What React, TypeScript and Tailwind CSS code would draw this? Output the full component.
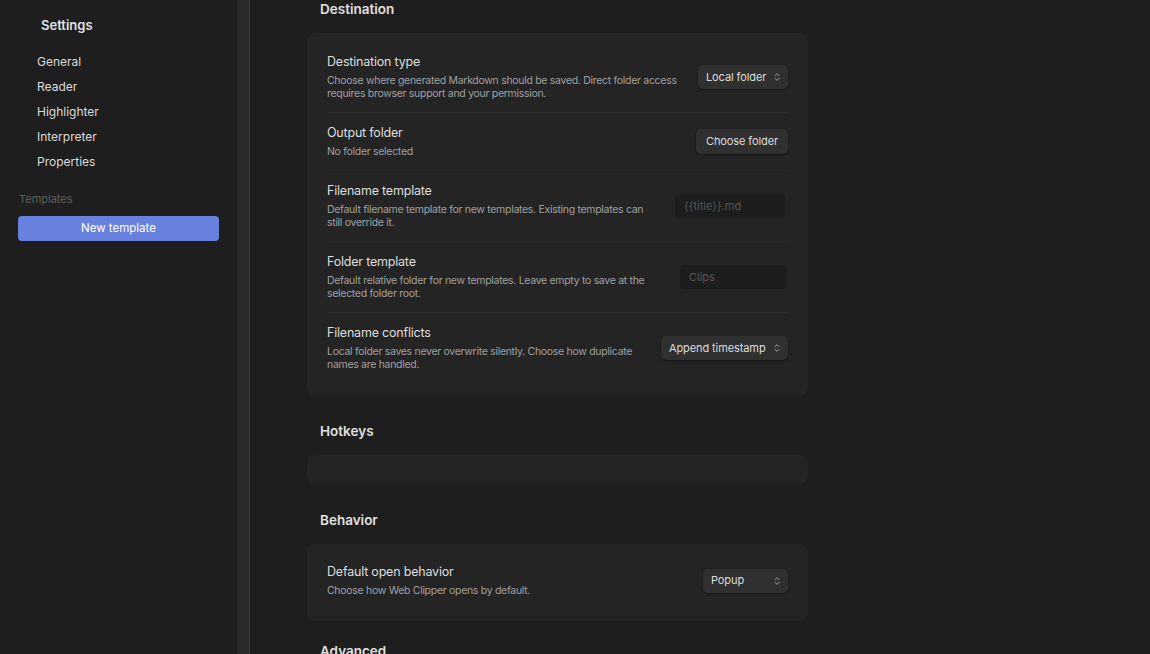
import { ChevronsUpDown } from 'lucide-react';

const navItems = ['General', 'Reader', 'Highlighter', 'Interpreter', 'Properties'];

const Select = ({ value, width }: { value: string; width: string }) => (
  <div className={`${width} h-[24px] flex items-center justify-between pl-[8px] pr-[6px] rounded-[5px] bg-[#303030] shadow-[0_1px_2px_rgba(0,0,0,0.45)] text-[11px] tracking-[-0.1px] text-[#dcdcdc] whitespace-nowrap flex-shrink-0`}>
    <span>{value}</span>
    <ChevronsUpDown size={10} strokeWidth={2} className="text-[#b5b5b5]" />
  </div>
);

const TextInput = ({ placeholder, width }: { placeholder: string; width: string }) => (
  <div className={`${width} h-[24px] flex items-center px-[9px] rounded-[4px] bg-[#1d1d1d] text-[11px] text-[#555555] flex-shrink-0`}>
    {placeholder}
  </div>
);

const Row = ({ title, desc, children, first }: { title: string; desc: string; children: React.ReactNode; first?: boolean }) => (
  <div className={`flex items-center justify-between gap-4 py-[12px] ${first ? '' : 'border-t border-[#2a2a2a]'}`}>
    <div className="flex-1 min-w-0">
      <p className="text-[12.5px] leading-[16px] tracking-[-0.2px] text-[#dedede]">{title}</p>
      <p className="mt-[4px] text-[10.5px] leading-[13px] tracking-[-0.3px] text-[#a0a0a0]">{desc}</p>
    </div>
    {children}
  </div>
);

const Section = ({ title, children, className }: { title: string; children?: React.ReactNode; className?: string }) => (
  <section className={className}>
    <h2 className="pl-[13px] text-[13.5px] leading-[20px] font-semibold text-[#e0e0e0] mb-[14px]">{title}</h2>
    {children}
  </section>
);

export default function App() {
  return (
    <div className="flex h-[654px] overflow-hidden bg-[#1e1e1e] font-['Inter',sans-serif]">
      {/* Sidebar */}
      <aside className="w-[237px] flex-shrink-0 px-[18px] pt-[16px]">
        <h1 className="pl-[23px] text-[13px] leading-[18px] font-semibold text-[#e2e2e2]">Settings</h1>
        <nav className="mt-[15px] pl-[19px] flex flex-col">
          {navItems.map((item) => (
            <span key={item} className="text-[12px] leading-[25px] text-[#dcdcdc]">{item}</span>
          ))}
        </nav>
        <p className="mt-[17px] pl-[1px] text-[11px] leading-[16px] text-[#5f5f5f]">Templates</p>
        <button className="mt-[9px] w-full h-[25px] rounded-[4px] bg-[#6881de] text-[11.5px] text-white">
          New template
        </button>
      </aside>

      {/* Gutter */}
      <div className="w-[13px] flex-shrink-0 bg-[#2a2a2a] border-l border-[#262626] border-r border-r-[#3d3d3d]" />

      {/* Main */}
      <main className="flex-1 pl-[57px] -mt-[1px]">
        <div className="w-[501px]">
          <Section title="Destination">
            <div className="rounded-[8px] bg-[#242424] px-[20px] pt-[9px] pb-[13px]">
              <Row first title="Destination type" desc="Choose where generated Markdown should be saved. Direct folder access requires browser support and your permission.">
                <Select value="Local folder" width="w-[90px]" />
              </Row>
              <Row title="Output folder" desc="No folder selected">
                <button className="h-[25px] px-[10px] rounded-[5px] bg-[#303030] shadow-[0_1px_2px_rgba(0,0,0,0.45)] text-[11px] tracking-[-0.1px] text-[#dcdcdc] whitespace-nowrap flex-shrink-0">
                  Choose folder
                </button>
              </Row>
              <Row title="Filename template" desc="Default filename template for new templates. Existing templates can still override it.">
                <div className="mr-[3px] flex-shrink-0">
                  <TextInput placeholder="{{title}}.md" width="w-[110px]" />
                </div>
              </Row>
              <Row title="Folder template" desc="Default relative folder for new templates. Leave empty to save at the selected folder root.">
                <div className="mr-[1px] flex-shrink-0">
                  <TextInput placeholder="Clips" width="w-[107px]" />
                </div>
              </Row>
              <Row title="Filename conflicts" desc="Local folder saves never overwrite silently. Choose how duplicate names are handled.">
                <Select value="Append timestamp" width="w-[127px]" />
              </Row>
            </div>
          </Section>

          <Section title="Hotkeys" className="mt-[25px]">
            <div className="h-[29px] rounded-[8px] bg-[#242424]" />
          </Section>

          <Section title="Behavior" className="mt-[26px]">
            <div className="rounded-[8px] bg-[#242424] px-[20px] pt-[8px] pb-[12px]">
              <Row first title="Default open behavior" desc="Choose how Web Clipper opens by default.">
                <Select value="Popup" width="w-[85px]" />
              </Row>
            </div>
          </Section>

          <Section title="Advanced" className="mt-[20px]" />
        </div>
      </main>
    </div>
  );
}
